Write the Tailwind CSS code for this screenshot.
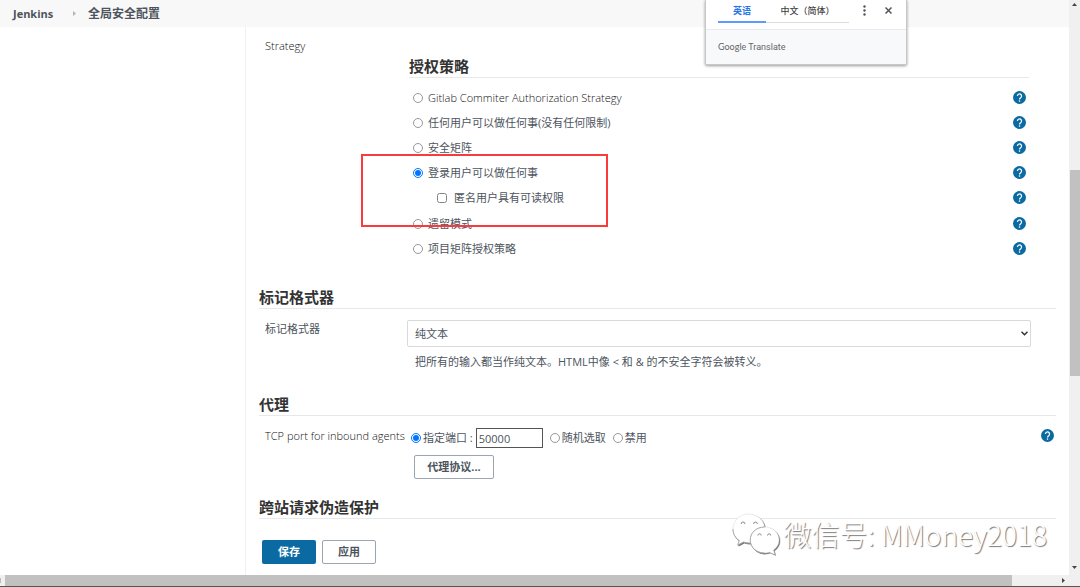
<!DOCTYPE html>
<html lang="zh-CN">
<head>
<meta charset="utf-8">
<title>全局安全配置 [Jenkins]</title>
<script src="https://cdn.jsdelivr.net/npm/@tailwindcss/browser@4"></script>
</head>
<body class="relative flex h-screen flex-col overflow-hidden bg-white font-['Open_Sans','Noto_Sans_CJK_SC',sans-serif] text-[11px] leading-4 text-[#4d545d]">
<svg class="hidden">
  <symbol id="help" viewBox="0 0 24 24">
    <circle cx="12" cy="12" r="12" fill="#0b6aa2"/>
    <path d="M8.2 9.2a3.8 3.8 0 1 1 6 3.1c-1.4 1-2.2 1.600-2.200 3.200" fill="none" stroke="#fff" stroke-width="2.300"/>
    <rect x="10.800" y="17.300" width="2.400" height="2.500" fill="#fff"/>
  </symbol>
</svg>
<div class="flex min-h-0 flex-1">
  <div class="flex min-w-0 flex-1 flex-col">
    <header class="h-[27px] shrink-0 bg-[#f8f8f8] px-[13px]">
      <nav class="flex h-full items-center font-bold" aria-label="breadcrumb">
        <a href="#" class="w-[60px]">Jenkins</a>
        <svg class="mr-3 h-[5px] w-[3px]" viewBox="0 0 3 5"><path d="M0 0l3 2.500L0 5z" fill="#b4b4b4"/></svg>
        <a href="#" class="text-[12px]">全局安全配置</a>
      </nav>
    </header>
    <div class="flex min-h-0 flex-1">
      <aside class="w-[246px] shrink-0 border-r border-[#f0f0f0]"></aside>
      <main class="min-w-0 flex-1 overflow-hidden pr-[13px] pl-[13px]">
        <section class="flex pr-[27px]">
          <div class="w-[150px] shrink-0 pt-[11px] pl-[6px] font-[350] text-[#111]">Strategy</div>
          <div class="relative min-w-0 flex-1 pt-[29px]">
            <h2 class="h-[22px] border-b border-[#e8e8e8] text-[15px] leading-[21px] font-bold text-[#333]">授权策略</h2>
            <div class="mt-[7px] pr-[3px] pl-1">
              <div class="flex h-[25px] items-center"><label class="flex items-center gap-[5px] font-[350] text-[#111]"><input type="radio" name="auth" class="size-[10px] opacity-75">Gitlab Commiter Authorization Strategy</label><button class="ml-auto" aria-label="帮助"><svg class="size-[13px]"><use href="#help"/></svg></button></div>
              <div class="flex h-[25px] items-center"><label class="flex items-center gap-[5px]"><input type="radio" name="auth" class="size-[10px] opacity-75">任何用户可以做任何事(没有任何限制)</label><button class="ml-auto" aria-label="帮助"><svg class="size-[13px]"><use href="#help"/></svg></button></div>
              <div class="flex h-[25px] items-center"><label class="flex items-center gap-[5px]"><input type="radio" name="auth" class="size-[10px] opacity-75">安全矩阵</label><button class="ml-auto" aria-label="帮助"><svg class="size-[13px]"><use href="#help"/></svg></button></div>
              <div class="flex h-[25px] items-center"><label class="flex items-center gap-[5px]"><input type="radio" name="auth" checked class="size-[10px]">登录用户可以做任何事</label><button class="ml-auto" aria-label="帮助"><svg class="size-[13px]"><use href="#help"/></svg></button></div>
              <div class="flex h-[25px] items-center pl-6"><label class="flex items-center gap-[7px]"><input type="checkbox" class="size-[10px] opacity-90">匿名用户具有可读权限</label><button class="ml-auto" aria-label="帮助"><svg class="size-[13px]"><use href="#help"/></svg></button></div>
              <div class="mt-px flex h-[25px] items-center"><label class="flex items-center gap-[5px]"><input type="radio" name="auth" class="size-[10px] opacity-75">遗留模式</label><button class="ml-auto" aria-label="帮助"><svg class="size-[13px]"><use href="#help"/></svg></button></div>
              <div class="flex h-[25px] items-center"><label class="flex items-center gap-[5px]"><input type="radio" name="auth" class="size-[10px] opacity-75">项目矩阵授权策略</label><button class="ml-auto" aria-label="帮助"><svg class="size-[13px]"><use href="#help"/></svg></button></div>
            </div>
            <div class="pointer-events-none absolute top-[127px] -left-12 h-[73px] w-[247px] border-2 border-[#f93b3b]"></div>
          </div>
        </section>
        <section class="mt-[26px]">
          <h2 class="h-[22px] border-b border-[#e8e8e8] text-[15px] leading-[21px] font-bold text-[#333]">标记格式器</h2>
          <div class="flex pr-[25px]">
            <label for="formatter" class="w-[148px] shrink-0 pt-3 pl-[6px]">标记格式器</label>
            <div class="min-w-0 flex-1 pt-[11px]">
              <div class="relative">
                <select id="formatter" class="block h-[27px] w-full appearance-none rounded-[2px] border border-[#d9d9d9] bg-white pl-[7px]"><option>纯文本</option></select>
                <svg class="pointer-events-none absolute top-[11px] right-[3px] h-[5px] w-[7px]" viewBox="0 0 7 5"><path d="M.5.8l3 3 3-3" fill="none" stroke="#333" stroke-width="1.500"/></svg>
              </div>
              <p class="mt-[7px] pl-2">把所有的输入都当作纯文本。HTML中像 &lt; 和 &amp; 的不安全字符会被转义。</p>
            </div>
          </div>
        </section>
        <section class="mt-6">
          <h2 class="h-[22px] border-b border-[#e8e8e8] text-[15px] leading-[21px] font-bold text-[#333]">代理</h2>
          <div class="flex items-start pt-3 pr-[2px]">
            <div class="w-[152px] shrink-0 pl-[6px] font-[350] whitespace-nowrap text-[#111]">TCP port for inbound agents</div>
            <div class="flex-1">
              <div class="flex h-5 items-center">
                <label class="flex items-center gap-[2px]"><input type="radio" name="port" checked class="size-[10px]">指定端口 :</label>
                <input type="text" value="50000" aria-label="端口" class="ml-[3px] h-5 w-[67px] border border-[#555] px-[2px]">
                <label class="ml-[7px] flex items-center gap-[2px]"><input type="radio" name="port" class="size-[10px] opacity-75">随机选取</label>
                <label class="ml-[7px] flex items-center gap-[2px]"><input type="radio" name="port" class="size-[10px] opacity-75">禁用</label>
              </div>
              <button class="mt-[7px] ml-[3px] block h-6 w-20 rounded-[2px] border border-[#9aa5b0] font-bold">代理协议...</button>
            </div>
            <button class="mt-px" aria-label="帮助"><svg class="size-[13px]"><use href="#help"/></svg></button>
          </div>
        </section>
        <section class="mt-[18px]">
          <h2 class="h-[22px] border-b border-[#e8e8e8] text-[15px] leading-[21px] font-bold text-[#333]">跨站请求伪造保护</h2>
          <div class="flex gap-[6px] pt-[21px] pl-[3px]">
            <button class="h-6 w-[54px] rounded-[2px] bg-[#0b6aa2] font-bold text-white">保存</button>
            <button class="h-6 w-[54px] rounded-[2px] border border-[#9aa5b0] font-bold">应用</button>
          </div>
        </section>
      </main>
    </div>
  </div>
  <div class="relative flex w-[11px] shrink-0 flex-col items-center bg-[#f0f0f0]">
    <svg class="mt-[3px] h-[3px] w-[5px]" viewBox="0 0 5 3"><path d="M0 3L2.500 0 5 3z" fill="#444"/></svg>
    <div class="mt-[164px] ml-px h-[206px] w-[10px] bg-[#c1c1c1]"></div>
    <svg class="mt-auto mb-[6px] h-[3px] w-[5px]" viewBox="0 0 5 3"><path d="M0 0h5L2.500 3z" fill="#444"/></svg>
  </div>
</div>
<div class="flex h-3 shrink-0 items-center border-b border-[#555] bg-[#f0f0f0]">
  <div class="h-[5px] w-px bg-[#bbb]"></div>
  <div class="ml-1 h-full flex-1 bg-[#c1c1c1]"></div>
  <svg class="mr-[15px] ml-[50px] h-[5px] w-[3px]" viewBox="0 0 3 5"><path d="M0 0l3 2.500L0 5z" fill="#444"/></svg>
</div>

<div class="absolute top-0 right-[173px] w-[202px] rounded-b-[2px] border border-t-0 border-[#c8c8c8] bg-white shadow-[0_1px_3px_rgba(0,0,0,0.4)]">
  <div class="flex h-[29px] pl-3">
    <div class="flex h-[23px] text-[9px] font-bold">
      <button class="w-12 border-b-2 border-[#5c9dfc] text-[#2a76e8]">英语</button>
      <button class="w-[83px] border-b border-[#ddd] font-medium whitespace-nowrap text-[#444]">中文（简体）</button>
    </div>
    <button class="ml-[14px] h-[21px]" aria-label="选项"><svg class="h-[11px] w-[3px]" viewBox="0 0 3 11" fill="#555"><circle cx="1.500" cy="1.500" r="1.200"/><circle cx="1.500" cy="5.500" r="1.200"/><circle cx="1.500" cy="9.500" r="1.200"/></svg></button>
    <button class="ml-[19px] h-[21px]" aria-label="关闭"><svg class="size-[7px]" viewBox="0 0 7 7"><path d="M.5.5l6 6m0-6l-6 6" stroke="#555" stroke-width="1.500"/></svg></button>
  </div>
  <div class="flex h-[35px] items-center border-t border-[#e8eaed] bg-[#f8f9fb] pl-3 font-['Roboto',sans-serif] text-[9px] text-[#666]"><span class="mr-[2px] font-['Lato',sans-serif]">Google</span>Translate</div>
</div>

<div class="pointer-events-none absolute right-[33px] bottom-8 flex items-center gap-1 text-[28px] leading-[42px] font-light text-white [text-shadow:1px_1px_1px_#777]">
  <svg class="h-[42px] w-12 overflow-visible drop-shadow-[1px_1px_0.5px_#777]" viewBox="0 0 50 42" preserveAspectRatio="none" fill="#fff" stroke="#ccc" stroke-width=".4">
    <path d="M17.500 1C8 1 1 7.500 1 16c0 5 2.500 9 6.500 11.500L6 32l6-3c2 .7 4 1 6.500 1C27 30 34 24 34 16 34 7.500 27 1 17.500 1z"/>
    <path d="M1 16c0 5 2.500 9 6.500 11.500L6 32l6-3c2 .7 4 1 6.500 1" fill="none" stroke="#999" stroke-width=".8"/>
    <path d="M34 14c-8.500 0-15 5.500-15 13s6.500 13 15 13c2 0 3.500-.3 5-.8l5.500 2.300-1.300-4.500C47 34.500 49 31 49 27c0-7.500-6.500-13-15-13z"/>
    <path d="M34 14c-8.500 0-15 5.500-15 13s6.500 13 15 13" fill="none" stroke="#999" stroke-width=".8"/>
    <g fill="none" stroke="#888" stroke-width="1"><path d="M9.500 11a2 2 0 0 1 4 0M22.500 11a2 2 0 0 1 4 0M27 22.500a1.700 1.700 0 0 1 3.400 0M37 22.500a1.700 1.700 0 0 1 3.400 0"/></g>
  </svg>
  <span class="font-['Noto_Sans_CJK_SC',sans-serif]">微信号: MMoney2018</span>
</div>
</body>
</html>
